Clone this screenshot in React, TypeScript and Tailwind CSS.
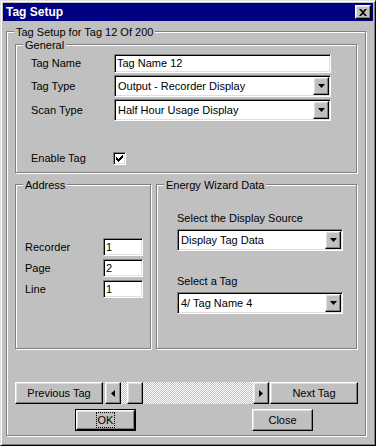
import React from "react";

// classic win9x bevels
const raised =
  "bg-[#c0c0c0] border border-t-white border-l-white border-r-black border-b-black shadow-[inset_-1px_-1px_#808080,inset_1px_1px_#dfdfdf]";
const sunken =
  "border border-t-[#808080] border-l-[#808080] border-r-white border-b-white shadow-[inset_1px_1px_#000,inset_-1px_-1px_#dfdfdf]";
const etched =
  "relative border border-[#808080] shadow-[inset_1px_1px_#fff,1px_1px_#fff]";

const Legend = ({ children }: { children: React.ReactNode }) => (
  <span className="absolute left-[7px] top-[-7px] px-[2px] bg-[#c0c0c0] leading-[14px] whitespace-nowrap">
    {children}
  </span>
);

const DownArrow = () => (
  <svg width="7" height="4" viewBox="0 0 7 4">
    <path d="M0 0h7L3.5 4z" fill="#000" />
  </svg>
);

const Select = ({ value, className }: { value: string; className: string }) => (
  <div className={`${sunken} bg-white p-[1px] flex h-[22px] ${className}`}>
    <span className="flex-1 pl-[2px] leading-[18px] whitespace-nowrap overflow-hidden">{value}</span>
    <span className={`${raised} w-[16px] flex items-center justify-center`}>
      <DownArrow />
    </span>
  </div>
);

const TextBox = ({ value, className }: { value: string; className: string }) => (
  <div className={`${sunken} bg-white pl-[2px] flex items-center ${className}`}>{value}</div>
);

const Button = ({ label, className }: { label: string; className: string }) => (
  <div className={`${raised} h-[22px] flex items-center justify-center ${className}`}>{label}</div>
);

export default function App() {
  const address = [
    { label: "Recorder", value: "1" },
    { label: "Page", value: "2" },
    { label: "Line", value: "1" },
  ];

  return (
    <div className="w-[376px] h-[446px] font-['Liberation_Sans',Arial,sans-serif] text-[11px] text-black">
      <div className="w-full h-full bg-[#c0c0c0] border border-t-[#dfdfdf] border-l-[#dfdfdf] border-r-black border-b-black shadow-[inset_1px_1px_#fff,inset_-1px_-1px_#808080] p-[2px] flex flex-col">
        {/* title bar */}
        <div className="h-[18px] bg-[#000080] flex items-center justify-between pl-[3px] pr-[2px]">
          <span className="text-white font-bold text-[12px] leading-none">Tag Setup</span>
          <div className={`${raised} w-[16px] h-[14px] flex items-center justify-center`}>
            <svg width="8" height="7" viewBox="0 0 8 7">
              <path d="M0 0h2l2 2 2-2h2L5 3.5 8 7H6L4 5 2 7H0l3-3.5z" fill="#000" />
            </svg>
          </div>
        </div>

        <div className={`${etched} ml-[3px] mt-[10px] w-[360px] h-[405px]`}>
          <Legend>Tag Setup for Tag 12 Of 200</Legend>
          <div className="pl-[8px] pt-[12px]">
            {/* General */}
            <div className={`${etched} w-[342px] h-[129px]`}>
              <Legend>General</Legend>
              <div className="pl-[15px] pt-[9px] flex flex-col">
                <div className="flex items-center">
                  <span className="w-[83px]">Tag Name</span>
                  <TextBox value="Tag Name 12" className="w-[217px] h-[19px]" />
                </div>
                <div className="flex items-center mt-[2px]">
                  <span className="w-[83px]">Tag Type</span>
                  <Select value="Output - Recorder Display" className="w-[217px]" />
                </div>
                <div className="flex items-center mt-[2px]">
                  <span className="w-[83px]">Scan Type</span>
                  <Select value="Half Hour Usage Display" className="w-[217px]" />
                </div>
                <div className="flex items-center mt-[31px] h-[13px]">
                  <span className="w-[82px]">Enable Tag</span>
                  <div className={`${sunken} bg-white w-[13px] h-[13px] flex items-center justify-center`}>
                    <svg width="7" height="7" viewBox="0 0 7 7">
                      <path d="M0 2h1v1h1v1h1V3h1V2h1V1h1V0h1v3H6v1H5v1H4v1H3v1H2V6H1V5H0z" fill="#000" />
                    </svg>
                  </div>
                </div>
              </div>
            </div>

            <div className="flex mt-[11px]">
              {/* Address */}
              <div className={`${etched} w-[136px] h-[165px]`}>
                <Legend>Address</Legend>
                <div className="pl-[9px] pt-[53px] flex flex-col gap-[3px]">
                  {address.map((row, i) => (
                    <div key={`addr-${i}`} className="flex items-center">
                      <span className="w-[78px]">{row.label}</span>
                      <TextBox value={row.value} className="w-[40px] h-[18px]" />
                    </div>
                  ))}
                </div>
              </div>

              {/* Energy Wizard Data */}
              <div className={`${etched} ml-[5px] w-[201px] h-[165px]`}>
                <Legend>Energy Wizard Data</Legend>
                <div className="pl-[20px] pt-[26px] flex flex-col">
                  <span className="leading-[14px]">Select the Display Source</span>
                  <Select value="Display Tag Data" className="w-[166px] mt-[4px]" />
                  <span className="leading-[14px] mt-[23px]">Select a Tag</span>
                  <Select value="4/ Tag Name 4" className="w-[166px] mt-[4px]" />
                </div>
              </div>
            </div>

            {/* navigation */}
            <div className="flex h-[22px] mt-[33px]">
              <Button label="Previous Tag" className="w-[88px]" />
              <div className={`${raised} w-[16px] ml-[2px] flex items-center justify-center`}>
                <svg width="4" height="7" viewBox="0 0 4 7">
                  <path d="M4 0v7L0 3.5z" fill="#000" />
                </svg>
              </div>
              <div className="w-[132px] flex bg-[image:repeating-conic-gradient(#fff_0_25%,#c0c0c0_0_50%)] bg-[length:2px_2px]">
                <div className={`${raised} w-[16px] ml-[6px]`} />
              </div>
              <div className={`${raised} w-[16px] flex items-center justify-center`}>
                <svg width="4" height="7" viewBox="0 0 4 7">
                  <path d="M0 0v7L4 3.5z" fill="#000" />
                </svg>
              </div>
              <Button label="Next Tag" className="w-[88px] ml-[1px]" />
            </div>

            <div className="flex mt-[5px]">
              <div className="ml-[60px] w-[61px] h-[22px] border border-black flex">
                <div className={`${raised} flex-1 flex items-center justify-center`}>
                  <span className="border border-dotted border-black h-[16px] px-[1px] flex items-center">OK</span>
                </div>
              </div>
              <Button label="Close" className="w-[61px] ml-[116px]" />
            </div>
          </div>
        </div>
      </div>
    </div>
  );
}
